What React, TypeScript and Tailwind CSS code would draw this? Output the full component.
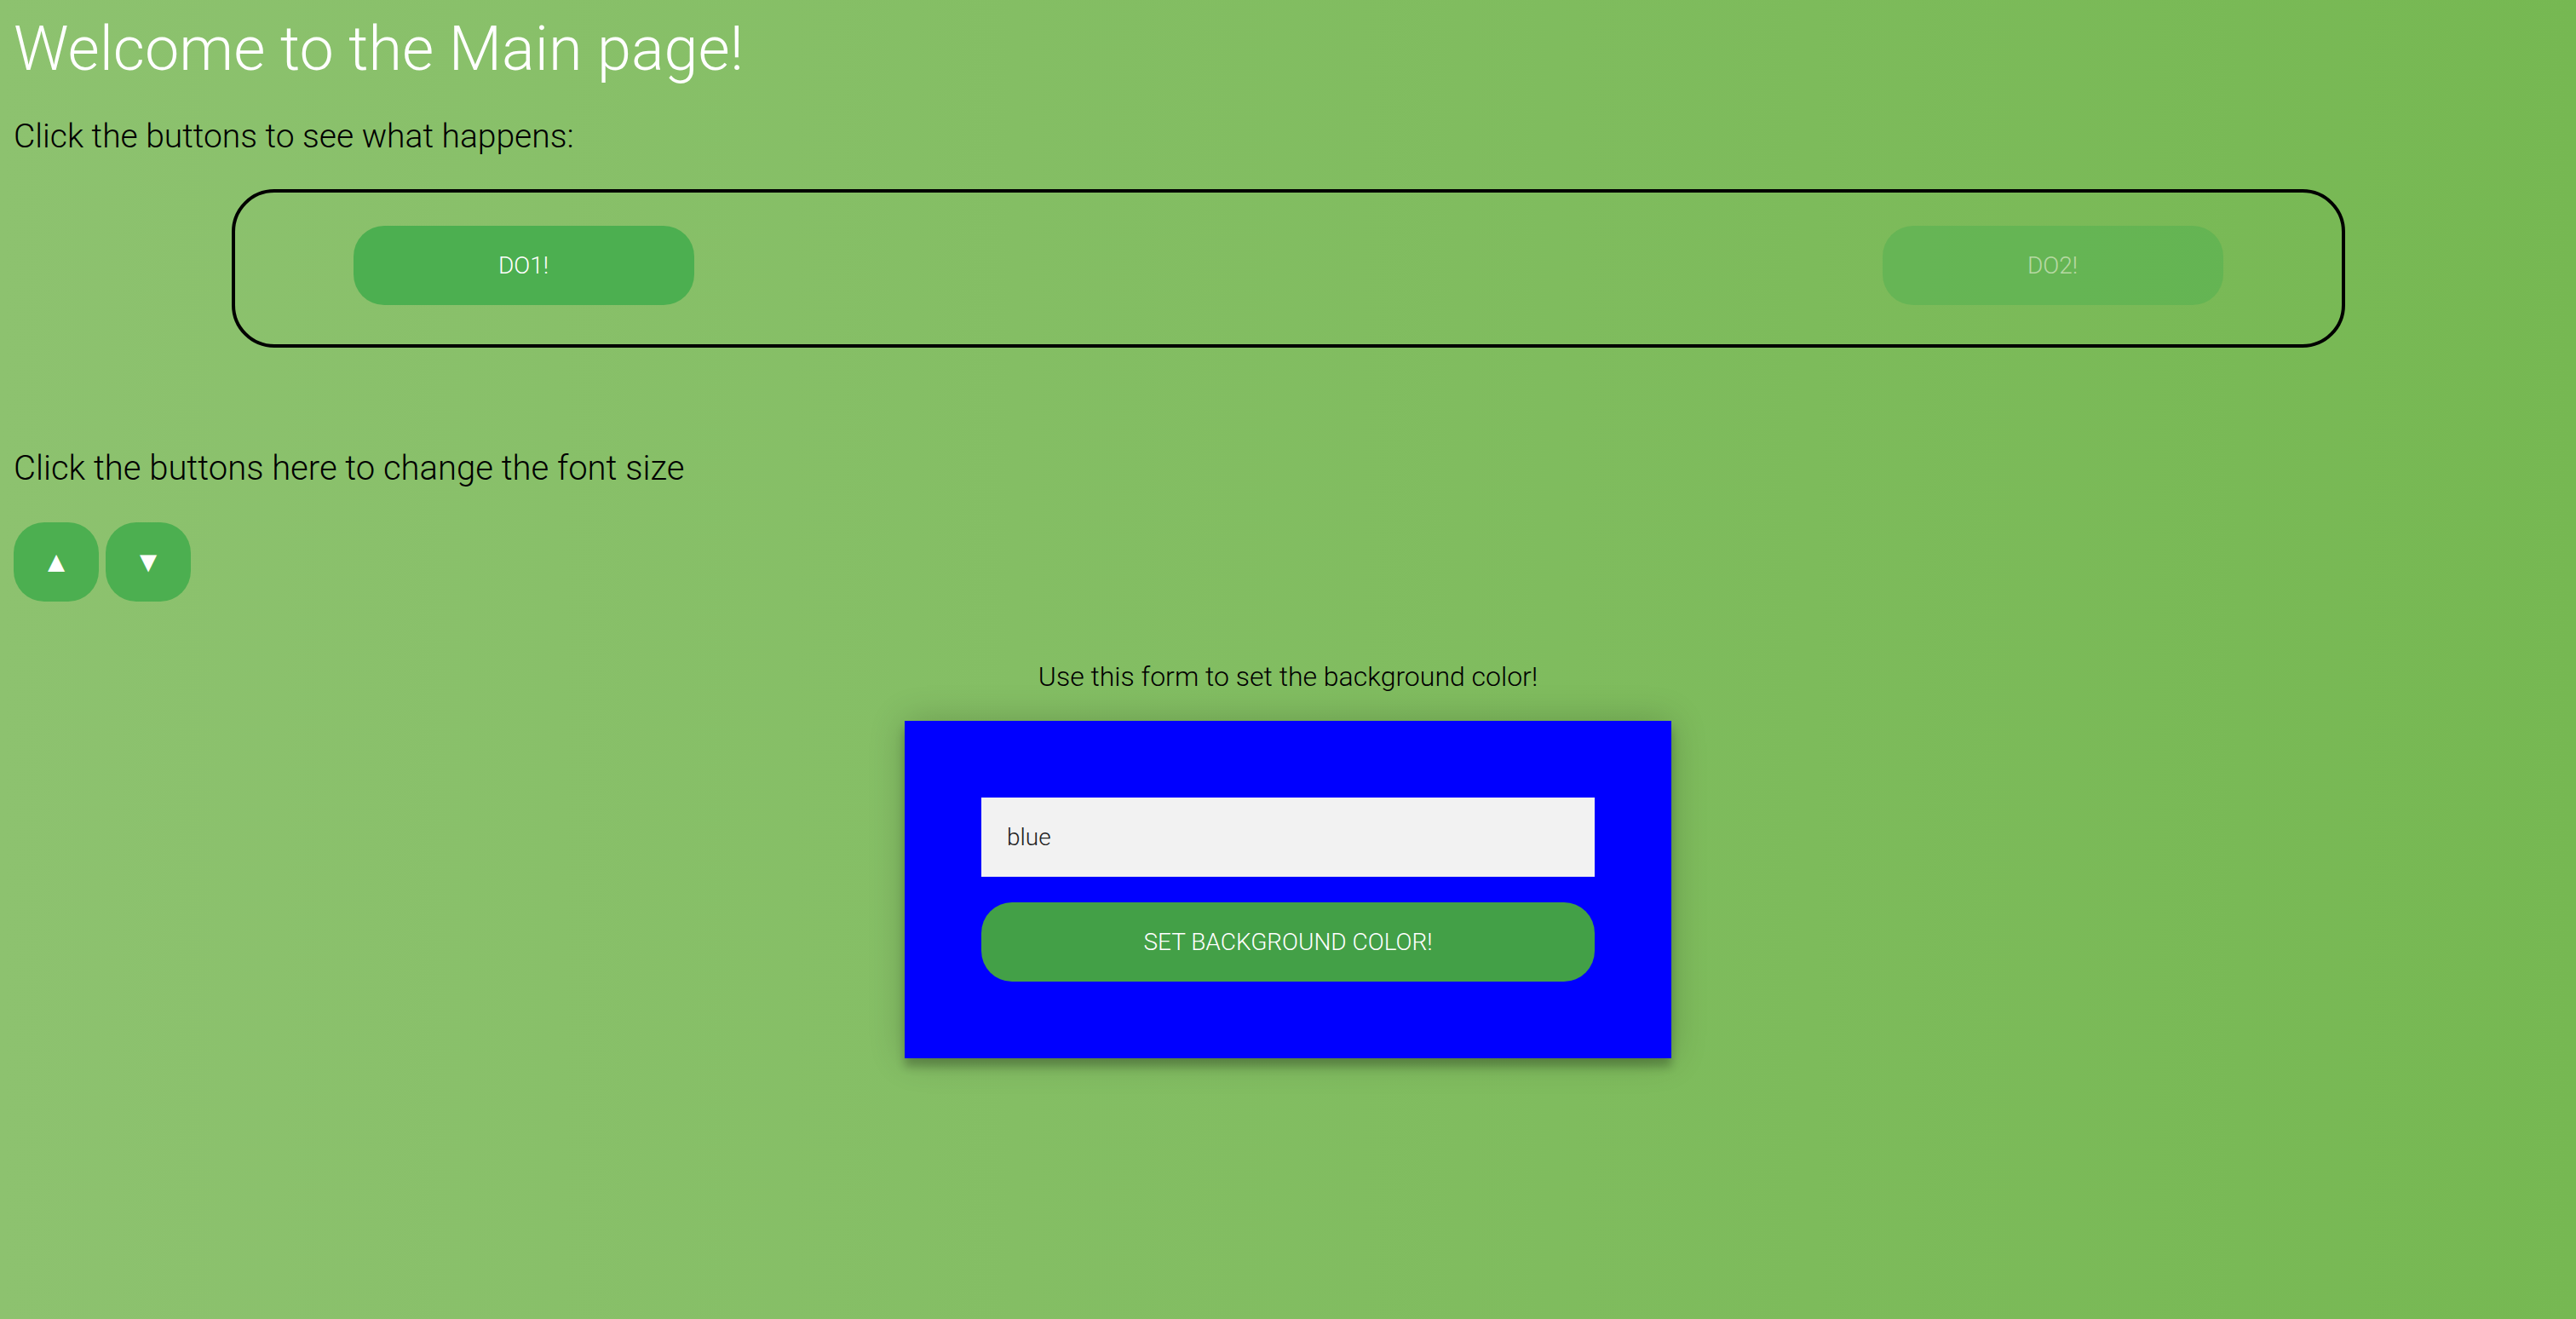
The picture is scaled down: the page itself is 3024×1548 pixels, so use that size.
import { useState } from "react";

export default function App() {
  const [color, setColor] = useState("blue");

  return (
    <div className="min-h-screen w-full bg-linear-to-r from-[#8dc26f] to-[#76b852] px-[16px] pt-[16px] font-['Roboto','Liberation_Sans',sans-serif] font-light text-black">
      <h1 className="text-[72px] leading-[84px] font-light text-white">Welcome to the Main page!</h1>
      <p className="mt-[37px] text-[39px] leading-[46px]">Click the buttons to see what happens:</p>

      {/* DO buttons */}
      <div className="mx-auto mt-[39px] flex h-[186px] w-[2481px] items-start justify-between rounded-[50px] border-4 border-black px-[139px] pt-[39px]">
        <button className="h-[93px] w-[400px] rounded-[36px] bg-[#4caf50] text-[28px] font-light text-white">DO1!</button>
        <button className="h-[93px] w-[400px] rounded-[36px] bg-[#4caf50] text-[28px] font-light text-white opacity-45" disabled>
          DO2!
        </button>
      </div>

      <p className="mt-[118px] text-[40px] leading-[47px]">Click the buttons here to change the font size</p>
      <div className="mt-[40px] flex gap-[8px]">
        <button className="flex h-[93px] w-[100px] items-center justify-center rounded-[36px] bg-[#4caf50] font-['DejaVu_Sans',sans-serif] text-[34px] text-white">▲</button>
        <button className="flex h-[93px] w-[100px] items-center justify-center rounded-[36px] bg-[#4caf50] font-['DejaVu_Sans',sans-serif] text-[34px] text-white">▼</button>
      </div>

      {/* background form */}
      <p className="mt-[70px] text-center text-[32px] leading-[37px]">Use this form to set the background color!</p>
      <div className="mx-auto mt-[33px] w-[900px] bg-[#0000ff] p-[90px] shadow-[0_0_40px_0_rgba(0,0,0,0.2),0_10px_10px_0_rgba(0,0,0,0.24)]">
        <input
          className="block h-[93px] w-full bg-[#f2f2f2] px-[30px] text-[28px] text-[#222] outline-none"
          value={color}
          onChange={(e) => setColor(e.target.value)}
        />
        <button className="mt-[30px] h-[93px] w-full rounded-[36px] bg-[#43a047] text-[28px] font-light uppercase text-white">
          Set background color!
        </button>
      </div>
    </div>
  );
}
